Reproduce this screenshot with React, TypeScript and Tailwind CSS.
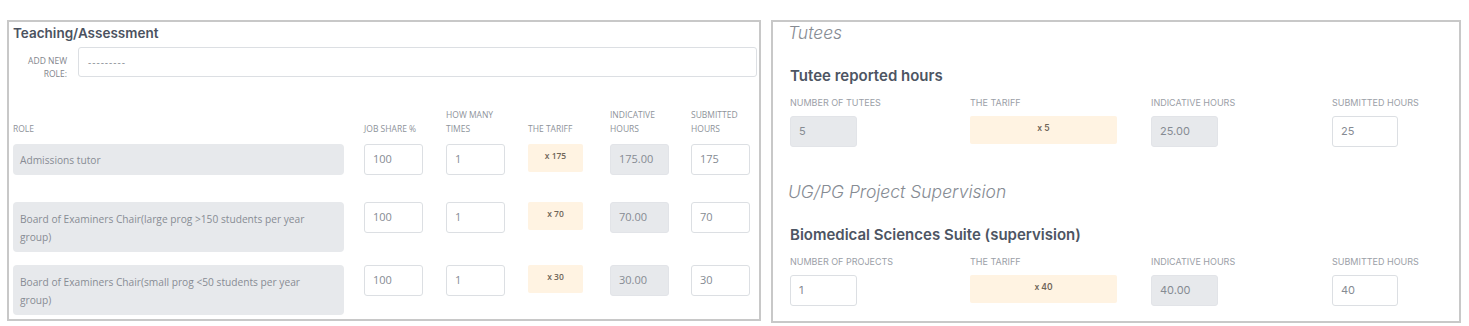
import React from "react";

const leftFont = { fontFamily: '"Open Sans", "Noto Sans", sans-serif' };
const rightFont = { fontFamily: 'Inter, "Noto Sans", sans-serif' };

function Box({ v, kind, w = "w-[59px]", h = "h-[31px]" }: { v: string; kind: "input" | "gray" | "tariff"; w?: string; h?: string }) {
  if (kind === "tariff") {
    return (
      <div className={`${w} h-[28px] bg-[#fff3e2] rounded-[2px] flex justify-center pt-[7px] text-[8.5px] font-semibold text-[#6f6558] leading-[10px]`}>
        {v}
      </div>
    );
  }
  const cls =
    kind === "gray"
      ? "bg-[#e7e9ec] border-[#e2e4e8]"
      : "bg-white border-[#dcdfe3]";
  return (
    <div className={`${w} ${h} ${cls} border rounded-[3px] flex items-center pl-[8px] text-[11px] text-[#868b93]`}>
      {v}
    </div>
  );
}

const rows = [
  { role: ["Admissions tutor"], h: "h-[31px]", tariff: "x 175", ind: "175.00", sub: "175", mb: "mb-[27px]", pt: "items-center" },
  { role: ["Board of Examiners Chair(large prog >150 students per year", "group)"], h: "h-[50px]", tariff: "x 70", ind: "70.00", sub: "70", mb: "mb-[13px]", pt: "pt-[8px]" },
  { role: ["Board of Examiners Chair(small prog <50 students per year", "group)"], h: "h-[50px]", tariff: "x 30", ind: "30.00", sub: "30", mb: "", pt: "pt-[8px]" },
];

function Hdr({ children }: { children: React.ReactNode }) {
  return <div className="text-[8.5px] leading-[14px] uppercase text-[#8e939a]">{children}</div>;
}

function Section({ title, sub, first, firstKind, tariff, ind, subm }: { title: string; sub: string; first: string; firstKind: "input" | "gray"; tariff: string; ind: string; subm: string }) {
  return (
    <div>
      <div className="ml-[-2px] text-[17.5px] leading-[22px] italic font-light text-[#868b93]">{title}</div>
      <div className="mt-[23px] text-[15px] leading-[18px] font-semibold text-[#4d5563]">{sub}</div>
      <div className="mt-[13px] grid grid-cols-[180px_181px_181px_181px] text-[9px] leading-[10px] uppercase text-[#9ba0a7]">
        <div>{first}</div>
        <div>The tariff</div>
        <div>Indicative hours</div>
        <div>Submitted hours</div>
      </div>
      <div className="mt-[8px] grid grid-cols-[180px_181px_181px_181px] items-start">
        <Box v={firstKind === "gray" ? "5" : "1"} kind={firstKind} w="w-[67px]" />
        <Box v={tariff} kind="tariff" w="w-[147px]" />
        <Box v={ind} kind="gray" w="w-[67px]" />
        <Box v={subm} kind="input" w="w-[66px]" />
      </div>
    </div>
  );
}

export default function App() {
  return (
    <div className="w-[1469px] h-[326px] bg-white flex pt-[20px] pl-[7px] gap-[10px]">
      <div className="w-[754px] h-[301px] border-2 border-[#c8c8c8] overflow-hidden pl-[4px] pr-[2px] pt-[2px]" style={leftFont}>
        <div className="text-[13.5px] leading-[18px] font-semibold text-[#4b5260]" style={rightFont}>Teaching/Assessment</div>
        <div className="mt-[5px] flex h-[30px]">
          <div className="w-[54px] text-right text-[8.5px] leading-[13px] uppercase text-[#7f848b] pt-[7px]">
            Add new
            <br />
            role:
          </div>
          <div className="ml-[11px] flex-1 border border-[#dcdfe3] rounded-[3px] flex items-center pl-[9px] text-[10px] text-[#8a8f96] tracking-[1px]">---------</div>
        </div>
        <div className="mt-[31px] grid grid-cols-[351px_82px_82px_82px_81px_1fr] items-end">
          <Hdr>Role</Hdr>
          <Hdr>Job share %</Hdr>
          <Hdr>
            How many
            <br />
            times
          </Hdr>
          <Hdr>The tariff</Hdr>
          <Hdr>
            Indicative
            <br />
            hours
          </Hdr>
          <Hdr>
            Submitted
            <br />
            hours
          </Hdr>
        </div>
        <div className="mt-[8px]">
          {rows.map((r, i) => (
            <div key={i} className={`grid grid-cols-[351px_82px_82px_82px_81px_1fr] items-start ${r.mb}`}>
              <div className={`w-[331px] ${r.h} bg-[#e7e9ec] rounded-[4px] pl-[7px] pr-[6px] flex ${r.pt} text-[10.2px] leading-[18px] text-[#878c94]`}>
                <span>
                  {r.role.map((line, j) => (
                    <React.Fragment key={j}>
                      {j > 0 && <br />}
                      {line}
                    </React.Fragment>
                  ))}
                </span>
              </div>
              <Box v="100" kind="input" />
              <Box v="1" kind="input" />
              <Box v={r.tariff} kind="tariff" w="w-[55px]" />
              <Box v={r.ind} kind="gray" />
              <Box v={r.sub} kind="input" />
            </div>
          ))}
        </div>
      </div>
      <div className="w-[690px] h-[303px] border-2 border-[#c8c8c8] overflow-hidden pl-[17px]" style={rightFont}>
        <Section title="Tutees" sub="Tutee reported hours" first="Number of tutees" firstKind="gray" tariff="x 5" ind="25.00" subm="25" />
        <div className="mt-[34px]">
          <Section title="UG/PG Project Supervision" sub="Biomedical Sciences Suite (supervision)" first="Number of projects" firstKind="input" tariff="x 40" ind="40.00" subm="40" />
        </div>
      </div>
    </div>
  );
}
